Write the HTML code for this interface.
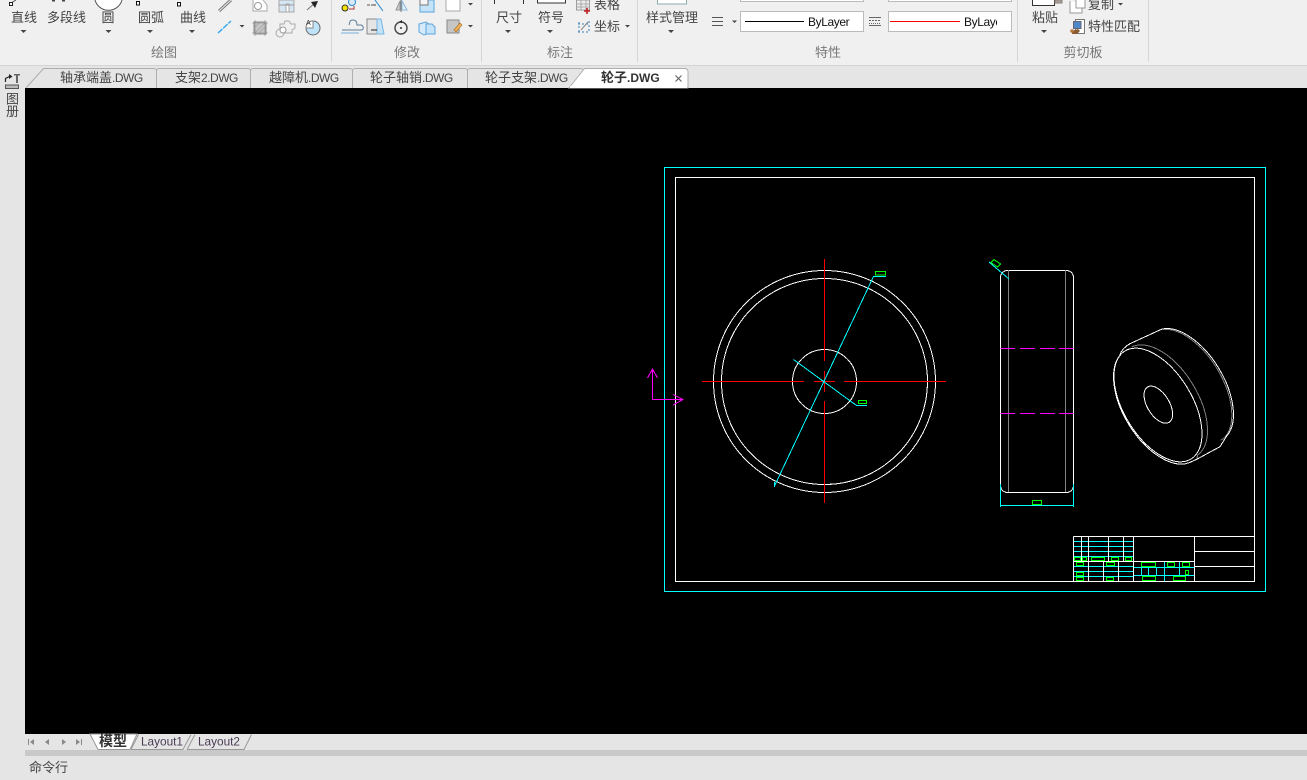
<!DOCTYPE html>
<html lang="zh">
<head>
<meta charset="utf-8">
<title>CAD</title>
<style>
html,body{margin:0;padding:0;width:1307px;height:780px;overflow:hidden;background:#e5e5e5}
svg{display:block;position:absolute;left:0;top:0}
text{font-family:"Liberation Sans","Noto Sans CJK SC",sans-serif;font-size:13px;fill:#444}
.c{text-anchor:middle}
.g{fill:#777;text-anchor:middle}
.l{font-size:12px;letter-spacing:-.5px}
.cad{fill:none;stroke-width:1;shape-rendering:crispEdges}
.w{stroke:#fff}.cy{stroke:#0ff}.r{stroke:#f00}.m{stroke:#f0f}.gr{stroke:#0f0}.gy{stroke:#808080}
</style>
</head>
<body>
<svg width="1307" height="780" viewBox="0 0 1307 780" xmlns="http://www.w3.org/2000/svg">
<!-- backgrounds -->
<rect x="0" y="0" width="1307" height="65" fill="#f0f0f0"/>
<rect x="0" y="65" width="1307" height="1" fill="#d4d4d4"/>
<rect x="0" y="66" width="1307" height="714" fill="#e5e5e5"/>
<rect x="25" y="88" width="1282" height="646" fill="#000"/>
<rect x="25" y="750" width="1282" height="6" fill="#c9c9c9"/>

<!-- ribbon separators -->
<g fill="#d6d6d6">
<rect x="331" y="0" width="1" height="62"/>
<rect x="481" y="0" width="1" height="62"/>
<rect x="637" y="0" width="1" height="62"/>
<rect x="1017" y="0" width="1" height="62"/>
<rect x="1148" y="0" width="1" height="62"/>
</g>

<!-- ribbon labels -->
<text class="c" x="24" y="22">直线</text>
<text class="c" x="66.500" y="22">多段线</text>
<text class="c" x="108" y="22">圆</text>
<text class="c" x="151" y="22">圆弧</text>
<text class="c" x="193" y="22">曲线</text>
<text class="c" x="509" y="22">尺寸</text>
<text class="c" x="551" y="22">符号</text>
<text class="c" x="672" y="22">样式管理</text>
<text class="c" x="1045" y="22">粘贴</text>
<text x="594" y="9">表格</text>
<text x="594" y="31">坐标</text>
<text x="1088" y="9">复制</text>
<text x="1088" y="31">特性匹配</text>
<text class="g" x="164" y="57">绘图</text>
<text class="g" x="407" y="57">修改</text>
<text class="g" x="560" y="57">标注</text>
<text class="g" x="828" y="57">特性</text>
<text class="g" x="1083" y="57">剪切板</text>

<!-- dropdown arrows -->
<g fill="#444">
<path d="M20.500 30h6l-3 3z"/><path d="M105.500 30h6l-3 3z"/><path d="M147 30h6l-3 3z"/><path d="M189 30h6l-3 3z"/>
<path d="M239.500 25h5l-2.500 2.500z"/><path d="M468 3h5l-2.500 2.500z"/><path d="M468 25h5l-2.500 2.500z"/>
<path d="M505 30h6l-3 3z"/><path d="M547 30h6l-3 3z"/><path d="M625 25h5l-2.500 2.500z"/><path d="M668 30h6l-3 3z"/>
<path d="M732 20.500h5l-2.500 2.500z"/><path d="M1041 30h6l-3 3z"/><path d="M1118 3h5l-2.500 2.500z"/>
<path d="M854 20.500h5l-2.500 2.500z" fill="#777"/><path d="M1003 20.500h5l-2.500 2.500z" fill="#777"/>
</g>

<!-- draw panel icons -->
<path d="M11 3 L16 0" stroke="#555" fill="none"/><rect x="9.500" y="2.500" width="3" height="3" fill="#fff" stroke="#222"/>
<rect x="52" y="0" width="3" height="1.500" fill="#444"/><rect x="62" y="0" width="3" height="1.500" fill="#444"/>
<path d="M95 0 A14 14 0 0 0 122 0" fill="#fff" stroke="#555"/>
<rect x="136.500" y="1.500" width="3" height="3.500" fill="#fff" stroke="#111"/>
<rect x="177.500" y="2.500" width="3" height="3.500" fill="#fff" stroke="#111"/>
<path d="M219 11 L231 0" stroke="#777" stroke-width="3" fill="none"/><path d="M219 11 L231 0" stroke="#eee" stroke-width="1" fill="none"/>
<path d="M218 33 L231 21" stroke="#3aa9ea" stroke-width="1.500" stroke-dasharray="6 1" fill="none"/>
<path d="M253 0v11h14v-6l-4-5" fill="#fff" stroke="#aaa"/><circle cx="258" cy="6" r="3.500" fill="#fff" stroke="#999"/>
<rect x="279" y="0" width="15" height="12" fill="#d6e6f2" stroke="#aaa"/><rect x="286" y="4" width="3" height="8" fill="#fff" stroke="#aaa"/><path d="M279 5h15" stroke="#999"/>
<path d="M307 10L316 2" stroke="#777"/><path d="M311 2L318 1 315 8z" fill="#222"/>
<rect x="254" y="22" width="12" height="12" fill="#c6c6c6" stroke="#888"/><path d="M254 34l12-12M258 34l8-8M254 28l6-6" stroke="#aaa"/>
<path d="M252 23h16M252 33h16M255 20v16M265 20v16" stroke="#888" stroke-width=".6"/>
<path d="M280 24h4l1-3h4l2 3 4 0 0 4 -3 2 0 3-8 0a4 4 0 1 1-4-4z" fill="#f0f0f0" stroke="#aaa"/><circle cx="283" cy="30" r="3" fill="#fff" stroke="#999"/>
<circle cx="313" cy="28" r="7" fill="#bfe3f8" stroke="#666"/><path d="M313 28V21A7 7 0 0 0 306 28z" fill="#fff" stroke="#888"/><text x="306" y="25" style="font-size:7px;fill:#333">A</text>

<!-- modify panel icons -->
<circle cx="352" cy="2" r="3.500" fill="#d6eafa" stroke="#2e8bd0"/><circle cx="345" cy="8" r="3" fill="#f5e200" stroke="#333"/><path d="M349 9h5v-3" stroke="#a33" fill="none"/>
<path d="M367 5h6" stroke="#555" stroke-dasharray="3 1"/><path d="M375 0L383 11" stroke="#2e8bd0" fill="none"/><path d="M373 5h3" stroke="#444"/>
<path d="M396 10l4-9v9z" fill="#ccc" stroke="#999"/><path d="M402 1l5 9h-5z" fill="#e6f1fa" stroke="#8ab8dc"/><path d="M401 0v12" stroke="#777"/>
<rect x="420" y="0" width="14" height="12" fill="#c4e3f8" stroke="#5ca4dc"/><rect x="420" y="-2" width="8" height="7" fill="#f5f5f5" stroke="#777"/>
<rect x="446" y="-1" width="14" height="12" fill="#fff" stroke="#aaa"/>
<path d="M342 30h19c3 0 3-4 0-5h-4c0-4-2-5-4-5-4 0-3 3-4 5" fill="none" stroke="#5a7b9a"/><path d="M341 33h18" stroke="#7ab0dd"/>
<path d="M367 19h10v15h-10z" fill="#e5e5e5" stroke="#888"/><path d="M377 19h4l3 15h-7z" fill="#c4e3f8" stroke="#7ab5e2"/><path d="M371 30h6" stroke="#222"/>
<circle cx="401" cy="28" r="6" fill="none" stroke="#444" stroke-width="1.400"/><circle cx="401" cy="28" r="1" fill="#333"/><path d="M399 22l3-2v3z" fill="#222"/>
<path d="M419 24l7-2 4 3v8l-6 2-5-3z" fill="#d6eafa" stroke="#5ca4dc"/><path d="M426 24h6l3 3v7h-9z" fill="#c4e3f8" stroke="#5ca4dc"/>
<rect x="447" y="20" width="12" height="13" fill="#c6c6c6" stroke="#888"/><path d="M454 30l6-7 2 2-6 7z" fill="#f2b45a" stroke="#a76b1d" stroke-width=".6"/>

<!-- annotation icons -->
<path d="M494.500 0v4M523.500 0v4" stroke="#333"/><path d="M537.500 0v3h28V0" fill="#fff" stroke="#333"/>
<rect x="576.500" y="0" width="13" height="10" fill="#eee" stroke="#999"/><path d="M576 4h14M576 7h14M581 0v10M586 0v10" stroke="#aaa"/><path d="M587 8v6M584 11h6" stroke="#c21d1d" stroke-width="1.600"/>
<g stroke="#3a7fb5" stroke-dasharray="2 2" fill="none"><path d="M579 22v11M589 21v12M578 24h12M578 32h12"/></g><path d="M581 30l7-8" stroke="#888"/>

<!-- style manager icon -->
<rect x="657.500" y="-3" width="29" height="7" fill="#fff" stroke="#8aa"/>

<!-- property icons -->
<path d="M712 17.500h11M712 21.500h11M712 25.500h11" stroke="#555"/>
<g stroke="#666"><path d="M869 17.500h12"/><path d="M869 20.500h12" stroke-dasharray="2 1"/><path d="M869 23.500h12" stroke-dasharray="1 1"/><path d="M869 25.500h12"/></g>
<rect x="740.500" y="-10" width="123" height="11.500" fill="#fff" stroke="#bbb"/>
<rect x="888.500" y="-10" width="123" height="11.500" fill="#fff" stroke="#bbb"/>
<rect x="740.500" y="11.500" width="123" height="20" fill="#fff" stroke="#bbb"/>
<rect x="888.500" y="11.500" width="123" height="20" fill="#fff" stroke="#bbb"/>
<rect x="745" y="21" width="59" height="1" fill="#000"/>
<rect x="890" y="21" width="70" height="1" style="fill:#f00"/>
<text x="808" y="26" style="fill:#111;font-size:12px;letter-spacing:-.4px">ByLayer</text>
<svg x="964" y="12" width="33" height="18" viewBox="964 12 33 18"><text x="964" y="26" style="fill:#111;font-size:12px;letter-spacing:-.4px">ByLayer</text></svg>

<!-- clipboard icons -->
<rect x="1032.500" y="-6" width="22" height="11.500" fill="#fff" stroke="#333"/><rect x="1055" y="0" width="7" height="3" fill="#aaa09a" stroke="#8a8078"/>
<path d="M1070 1v12h12v-10" fill="#fff" stroke="#999"/><path d="M1076 0v8h9V0" fill="#fff" stroke="#999"/>
<rect x="1075.500" y="19.500" width="9" height="14" fill="#fff" stroke="#777"/><rect x="1073.500" y="21.500" width="7.500" height="7" fill="#4e88c8" stroke="#667"/><path d="M1072 31l6-2 2 2-3 3h-5z" fill="#8a5a30"/><circle cx="1072" cy="31" r="1.800" fill="#b6783e"/>

<!-- left strip -->
<path d="M5.500 82v-3.500l4-2" stroke="#222" fill="none" stroke-width="1.200"/><path d="M9 74l3.500 2.500L9 79z" fill="#222"/>
<path d="M14 74h6v1.500h-2V83h-2V75.500h-2z" fill="#666"/>
<rect x="5.500" y="85" width="13" height="3.500" fill="#bbb" stroke="#555"/>
<text x="6" y="103.500">图</text>
<text x="6" y="116">册</text>

<!-- document tabs -->
<g fill="#e5e5e5" stroke="#aeaeae" stroke-width="1">
<path d="M26 88L43.500 68.500H154a2.500 2.500 0 0 1 2.500 2.500V88"/>
<path d="M156.500 71a2.500 2.500 0 0 1 2.500-2.500H248a2.500 2.500 0 0 1 2.500 2.500V88"/>
<path d="M250.500 71a2.500 2.500 0 0 1 2.500-2.500H350a2.500 2.500 0 0 1 2.500 2.500V88"/>
<path d="M352.500 71a2.500 2.500 0 0 1 2.500-2.500H465a2.500 2.500 0 0 1 2.500 2.500V88"/>
<path d="M467.500 71a2.500 2.500 0 0 1 2.500-2.500H581a2.500 2.500 0 0 1 2.500 2.500L570 88"/>
</g>
<path d="M569 88L584.500 68.500H685a3 3 0 0 1 3 3V88z" fill="#fff" stroke="#aeaeae"/>
<rect x="570" y="86" width="117" height="2" fill="#fff"/>
<text x="60" y="82">轴承端盖<tspan class="l">.DWG</tspan></text>
<text x="175" y="82">支架<tspan class="l">2.DWG</tspan></text>
<text x="269" y="82">越障机<tspan class="l">.DWG</tspan></text>
<text x="370" y="82">轮子轴销<tspan class="l">.DWG</tspan></text>
<text x="485" y="82">轮子支架<tspan class="l">.DWG</tspan></text>
<text x="601" y="82" style="font-weight:bold;fill:#333">轮子<tspan style="font-size:12px">.DWG</tspan></text>
<path d="M675.500 75.500l6 6M681.500 75.500l-6 6" stroke="#666" stroke-width="1.200"/>

<!-- bottom tabs -->
<g fill="#888">
<rect x="28" y="739" width="1" height="6"/><path d="M34 739v6l-4-3z"/>
<path d="M49 739v6l-4-3z"/>
<path d="M62 739v6l4-3z"/>
<path d="M76 739v6l4-3z"/><rect x="81" y="739" width="1" height="6"/>
</g>
<path d="M90 734L98 749.500H130L137 734z" fill="#fff" stroke="#999"/>
<path d="M131 749.500L138.500 734.500M183 749.500H131M183 749.500L191 734.500" stroke="#999" fill="none"/>
<path d="M187 749.500L195 734.500M187 749.500H244L251.500 734.500" stroke="#999" fill="none"/>
<text x="99" y="746" style="font-weight:bold;font-size:14px;fill:#333">模型</text>
<text x="141" y="745.500" style="fill:#4a3c55;font-size:11.800px">Layout1</text>
<text x="198" y="745.500" style="fill:#4a3c55;font-size:11.800px">Layout2</text>
<text x="29" y="772">命令行</text>

<!-- CAD drawing -->
<g class="cad">
<rect class="cy" x="664.500" y="167.500" width="601" height="424"/>
<rect class="w" x="675.500" y="177.500" width="579" height="404"/>

<!-- UCS -->
<path class="m" d="M652.500 370V399.500H682M647.500 378L652.500 369 657.500 378M673 394.500L683 399.500 673 405"/>

<!-- front view -->
<circle class="w" cx="824.500" cy="381.500" r="111"/>
<circle class="w" cx="824.500" cy="381.500" r="103"/>
<circle class="w" cx="824.500" cy="381.500" r="32"/>
<path class="r" d="M824.500 259V361M824.500 371V392M824.500 401V503M702 381.500H804M814 381.500H835M844 381.500H946"/>
<path class="cy" d="M774.500 487V482M774.500 486L873.500 276.500H886"/>
<path class="cy" d="M793.500 359.500L856.500 405.500H867"/>
<rect class="gr" x="875.500" y="271.500" width="10" height="3.500"/>
<rect class="gr" x="858.500" y="400.500" width="8" height="3"/>

<!-- side view -->
<rect class="w" x="1000.500" y="270.500" width="73" height="222" rx="7" ry="7"/>
<path class="gy" d="M1008.500 270V492M1065.500 270V492"/>
<path class="m" d="M1000.500 348.500H1015M1020 348.500H1035M1040 348.500H1055M1059 348.500H1073.500M1000.500 413.500H1015M1020 413.500H1035M1040 413.500H1055M1059 413.500H1073.500"/>
<path class="cy" d="M1000.500 484V507M1073.500 484V507M1000.500 505.500H1073.500M989 262L1009 279"/>
<rect class="gr" x="1032.500" y="500.500" width="9" height="4"/>
<path class="gr" d="M994 259.500L1000.500 264 997.500 267 991 262.500z"/>
</g>

<!-- isometric view -->
<g transform="translate(980 250) scale(.33333)" fill="none" stroke-width="3" shape-rendering="crispEdges">
<path d="M455 291A190 102 58.500 0 1 653 615L650 628" stroke="#808080"/>
<path d="M554 238A190 102 58.500 0 1 722 571" stroke="#808080"/>
<ellipse cx="534" cy="465" rx="190" ry="102" transform="rotate(58.500 534 465)" stroke="#fff"/>
<ellipse cx="535" cy="464" rx="62" ry="33" transform="rotate(58.500 535 464)" stroke="#fff"/>
<path d="M740 558L720 590L650 628L628 638A194 106 58.500 0 1 419 317Q425 295 450 281L544 238A190 102 58.500 0 1 740 558" stroke="#fff"/>
</g>

<!-- title block -->
<g class="cad">
<path class="cy" d="M1074 541.500H1133M1074 546.500H1133M1074 551.500H1133M1074 556.500H1133M1074 566.500H1133M1074 571.500H1133M1074 576.500H1133M1134 567.500H1194M1134 575.500H1194M1141.500 567V575M1148.500 567V575M1156.500 567V575M1164.500 561V581M1179.500 561V575"/>
<path class="w" d="M1073.500 536.500H1254.500M1073.500 536.500V581.500M1081.500 536.500V561.500M1088.500 536.500V581.500M1108.500 536.500V561.500M1123.500 536.500V561.500M1103.500 561.500V581.500M1118.500 561.500V581.500M1133.500 536.500V581.500M1194.500 536.500V581.500M1073.500 561.500H1194.500M1194.500 551.500H1254.500M1194.500 566.500H1254.500"/>
<g class="gr">
<rect x="1074.500" y="557.500" width="6" height="3"/>
<rect x="1082.500" y="557.500" width="4" height="3"/>
<rect x="1091.500" y="557.500" width="13" height="3"/>
<rect x="1111.500" y="557.500" width="7" height="3"/>
<rect x="1125.500" y="557.500" width="6" height="3"/>
<rect x="1076.500" y="562.500" width="7" height="3"/>
<rect x="1106.500" y="562.500" width="8" height="3"/>
<rect x="1076.500" y="572.500" width="7" height="3"/>
<rect x="1076.500" y="577.500" width="7" height="3"/>
<rect x="1106.500" y="577.500" width="7" height="3"/>
<rect x="1141.500" y="562.500" width="14" height="4"/>
<rect x="1167.500" y="562.500" width="7" height="4"/>
<rect x="1182.500" y="562.500" width="7" height="4"/>
<rect x="1185.500" y="570.500" width="3" height="4"/>
<rect x="1142.500" y="576.500" width="13" height="4"/>
<rect x="1173.500" y="576.500" width="12" height="4"/>
</g>
</g>
</svg>
</body>
</html>
